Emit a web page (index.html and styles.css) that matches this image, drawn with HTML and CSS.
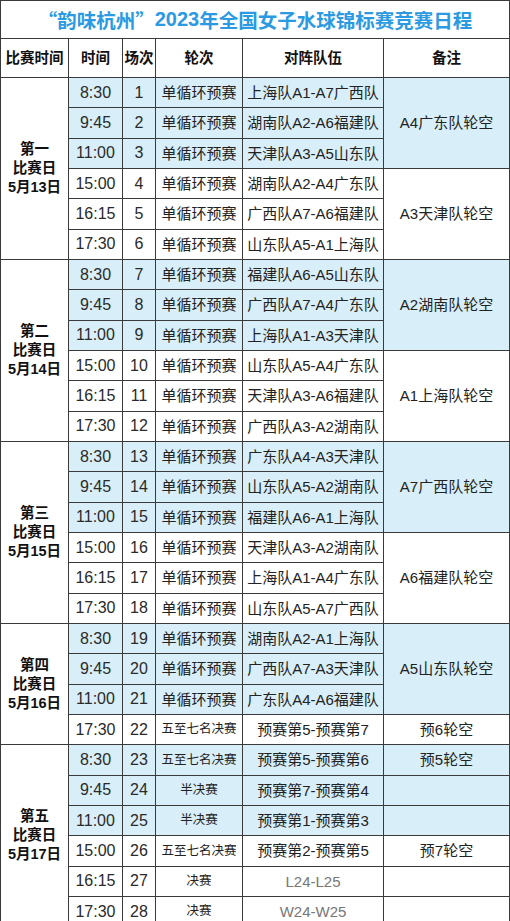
FILE: index.html
```html
<!DOCTYPE html>
<html lang="zh">
<head>
<meta charset="utf-8">
<title>“韵味杭州”2023年全国女子水球锦标赛竞赛日程</title>
<link rel="stylesheet" href="styles.css">
</head>
<body>
<div class="sheet">
  <div class="title">“韵味杭州”<span class="num">2023</span>年全国女子水球锦标赛竞赛日程</div>
  <div class="c hd">比赛时间</div><div class="c hd">时间</div><div class="c hd">场次</div><div class="c hd">轮次</div><div class="c hd">对阵队伍</div><div class="c hd">备注</div>

  <div class="c day s6">第一<br>比赛日<br>5月13日</div>
  <div class="c b t">8:30</div><div class="c b t">1</div><div class="c b">单循环预赛</div><div class="c b">上海队A1-A7广西队</div><div class="c b s3">A4广东队轮空</div>
  <div class="c b t">9:45</div><div class="c b t">2</div><div class="c b">单循环预赛</div><div class="c b">湖南队A2-A6福建队</div>
  <div class="c b t">11:00</div><div class="c b t">3</div><div class="c b">单循环预赛</div><div class="c b">天津队A3-A5山东队</div>
  <div class="c t">15:00</div><div class="c t">4</div><div class="c">单循环预赛</div><div class="c">湖南队A2-A4广东队</div><div class="c s3">A3天津队轮空</div>
  <div class="c t">16:15</div><div class="c t">5</div><div class="c">单循环预赛</div><div class="c">广西队A7-A6福建队</div>
  <div class="c t">17:30</div><div class="c t">6</div><div class="c">单循环预赛</div><div class="c">山东队A5-A1上海队</div>

  <div class="c day s6">第二<br>比赛日<br>5月14日</div>
  <div class="c b t">8:30</div><div class="c b t">7</div><div class="c b">单循环预赛</div><div class="c b">福建队A6-A5山东队</div><div class="c b s3">A2湖南队轮空</div>
  <div class="c b t">9:45</div><div class="c b t">8</div><div class="c b">单循环预赛</div><div class="c b">广西队A7-A4广东队</div>
  <div class="c b t">11:00</div><div class="c b t">9</div><div class="c b">单循环预赛</div><div class="c b">上海队A1-A3天津队</div>
  <div class="c t">15:00</div><div class="c t">10</div><div class="c">单循环预赛</div><div class="c">山东队A5-A4广东队</div><div class="c s3">A1上海队轮空</div>
  <div class="c t">16:15</div><div class="c t">11</div><div class="c">单循环预赛</div><div class="c">天津队A3-A6福建队</div>
  <div class="c t">17:30</div><div class="c t">12</div><div class="c">单循环预赛</div><div class="c">广西队A3-A2湖南队</div>

  <div class="c day s6">第三<br>比赛日<br>5月15日</div>
  <div class="c b t">8:30</div><div class="c b t">13</div><div class="c b">单循环预赛</div><div class="c b">广东队A4-A3天津队</div><div class="c b s3">A7广西队轮空</div>
  <div class="c b t">9:45</div><div class="c b t">14</div><div class="c b">单循环预赛</div><div class="c b">山东队A5-A2湖南队</div>
  <div class="c b t">11:00</div><div class="c b t">15</div><div class="c b">单循环预赛</div><div class="c b">福建队A6-A1上海队</div>
  <div class="c t">15:00</div><div class="c t">16</div><div class="c">单循环预赛</div><div class="c">天津队A3-A2湖南队</div><div class="c s3">A6福建队轮空</div>
  <div class="c t">16:15</div><div class="c t">17</div><div class="c">单循环预赛</div><div class="c">上海队A1-A4广东队</div>
  <div class="c t">17:30</div><div class="c t">18</div><div class="c">单循环预赛</div><div class="c">山东队A5-A7广西队</div>

  <div class="c day s4">第四<br>比赛日<br>5月16日</div>
  <div class="c b t">8:30</div><div class="c b t">19</div><div class="c b">单循环预赛</div><div class="c b">湖南队A2-A1上海队</div><div class="c b s3">A5山东队轮空</div>
  <div class="c b t">9:45</div><div class="c b t">20</div><div class="c b">单循环预赛</div><div class="c b">广西队A7-A3天津队</div>
  <div class="c b t">11:00</div><div class="c b t">21</div><div class="c b">单循环预赛</div><div class="c b">广东队A4-A6福建队</div>
  <div class="c t">17:30</div><div class="c t">22</div><div class="c sm">五至七名决赛</div><div class="c">预赛第5-预赛第7</div><div class="c">预6轮空</div>

  <div class="c day s6">第五<br>比赛日<br>5月17日</div>
  <div class="c b t">8:30</div><div class="c b t">23</div><div class="c b sm">五至七名决赛</div><div class="c b">预赛第5-预赛第6</div><div class="c b">预5轮空</div>
  <div class="c b t">9:45</div><div class="c b t">24</div><div class="c b sm">半决赛</div><div class="c b">预赛第7-预赛第4</div><div class="c b"></div>
  <div class="c b t">11:00</div><div class="c b t">25</div><div class="c b sm">半决赛</div><div class="c b">预赛第1-预赛第3</div><div class="c b"></div>
  <div class="c t">15:00</div><div class="c t">26</div><div class="c sm">五至七名决赛</div><div class="c">预赛第2-预赛第5</div><div class="c">预7轮空</div>
  <div class="c t">16:15</div><div class="c t">27</div><div class="c sm">决赛</div><div class="c gr">L24-L25</div><div class="c"></div>
  <div class="c t">17:30</div><div class="c t">28</div><div class="c sm">决赛</div><div class="c gr">W24-W25</div><div class="c"></div>
</div>
</body>
</html>
```

FILE: styles.css
```css
html, body {
  margin: 0;
  padding: 0;
  background: #ffffff;
}

body {
  font-family: "Liberation Sans", "Noto Sans CJK SC", sans-serif;
  color: #222;
}

.sheet {
  display: grid;
  grid-template-columns: 67px 53px 32px 86px 140px 125px;
  grid-template-rows: 37px 38px repeat(28, 29.333px);
  gap: 1px;
  padding: 1px;
  width: 510px;
  box-sizing: border-box;
  background: #3a3a3a;
}

.title {
  grid-column: 1 / -1;
  background: #fff;
  color: #2b9ae2;
  font-family: "Noto Sans CJK SC", sans-serif;
  font-weight: 700;
  font-size: 19.5px;
  display: flex;
  align-items: center;
  justify-content: center;
}

.title .num {
  font-family: "Liberation Sans", "Noto Sans CJK SC", sans-serif;
  font-size: 20px;
}

.c {
  background: #fff;
  display: flex;
  align-items: center;
  justify-content: center;
  text-align: center;
  font-size: 15px;
  white-space: nowrap;
  line-height: 1;
}

.hd {
  font-weight: 700;
  font-size: 14.5px;
  color: #111;
}

.b {
  background: #d8eef9;
}

.t {
  font-size: 16px;
  color: #2a2a2a;
}

.sm {
  font-size: 12.5px;
}

.gr {
  color: #777;
}

.day {
  grid-column: 1;
  font-weight: 700;
  font-size: 14.5px;
  line-height: 19px;
  color: #111;
}

.s6 { grid-row: span 6; }
.s4 { grid-row: span 4; }
.s3 { grid-row: span 3; }
```
